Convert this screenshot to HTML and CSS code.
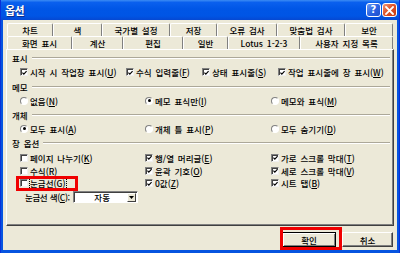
FILE: index.html
```html
<!DOCTYPE html>
<html lang="ko">
<head>
<meta charset="utf-8">
<title>옵션</title>
<link rel="stylesheet" href="styles.css">
</head>
<body>
<div class="win">
  <div class="titlebar">
    <span class="title">옵션</span>
    <div class="tbtns">
      <span class="tbtn help">?</span>
      <span class="tbtn close"><svg width="9" height="9" viewBox="0 0 9 9"><path d="M1 1 L8 8 M8 1 L1 8" stroke="#fff" stroke-width="1.8" stroke-linecap="square"/></svg></span>
    </div>
  </div>
  <div class="client">
    <div class="tabs">
      <div class="tabrow">
        <span class="tab w46">차트</span>
        <span class="tab w49">색</span>
        <span class="tab w68">국가별 설정</span>
        <span class="tab w47">저장</span>
        <span class="tab w60">오류 검사</span>
        <span class="tab w68">맞춤법 검사</span>
        <span class="tab grow">보안</span>
      </div>
      <div class="tabrow">
        <span class="tab sel w65">화면 표시</span>
        <span class="tab w51">계산</span>
        <span class="tab w60">편집</span>
        <span class="tab w45">일반</span>
        <span class="tab w72">Lotus 1-2-3</span>
        <span class="tab grow">사용자 지정 목록</span>
      </div>
    </div>
    <div class="panel">
      <div class="hdr first">표시</div>
      <div class="row four tall">
        <label class="opt"><span class="cb"><svg width="6" height="6" viewBox="0 0 6 6"><path d="M0.5 2.5 L2.2 4.3 L5.5 0.8" stroke="#000" stroke-width="1.4" fill="none"/></svg></span>시작 시 작업창 표시(<u>U</u>)</label>
        <label class="opt"><span class="cb"><svg width="6" height="6" viewBox="0 0 6 6"><path d="M0.5 2.5 L2.2 4.3 L5.5 0.8" stroke="#000" stroke-width="1.4" fill="none"/></svg></span>수식 입력줄(<u>F</u>)</label>
        <label class="opt"><span class="cb"><svg width="6" height="6" viewBox="0 0 6 6"><path d="M0.5 2.5 L2.2 4.3 L5.5 0.8" stroke="#000" stroke-width="1.4" fill="none"/></svg></span>상태 표시줄(<u>S</u>)</label>
        <label class="opt"><span class="cb"><svg width="6" height="6" viewBox="0 0 6 6"><path d="M0.5 2.5 L2.2 4.3 L5.5 0.8" stroke="#000" stroke-width="1.4" fill="none"/></svg></span>작업 표시줄에 창 표시(<u>W</u>)</label>
      </div>
      <div class="hdr">메모</div>
      <div class="row three">
        <label class="opt"><span class="rb"></span>없음(<u>N</u>)</label>
        <label class="opt"><span class="rb on"></span>메모 표식만(<u>I</u>)</label>
        <label class="opt"><span class="rb"></span>메모와 표식(<u>M</u>)</label>
      </div>
      <div class="hdr">개체</div>
      <div class="row three">
        <label class="opt"><span class="rb on"></span>모두 표시(<u>A</u>)</label>
        <label class="opt"><span class="rb"></span>개체 틀 표시(<u>P</u>)</label>
        <label class="opt"><span class="rb"></span>모두 숨기기(<u>D</u>)</label>
      </div>
      <div class="hdr wide">창 옵션</div>
      <div class="row three">
        <label class="opt"><span class="cb"></span>페이지 나누기(<u>K</u>)</label>
        <label class="opt"><span class="cb"><svg width="6" height="6" viewBox="0 0 6 6"><path d="M0.5 2.5 L2.2 4.3 L5.5 0.8" stroke="#000" stroke-width="1.4" fill="none"/></svg></span>행/열 머리글(<u>E</u>)</label>
        <label class="opt"><span class="cb"><svg width="6" height="6" viewBox="0 0 6 6"><path d="M0.5 2.5 L2.2 4.3 L5.5 0.8" stroke="#000" stroke-width="1.4" fill="none"/></svg></span>가로 스크롤 막대(<u>T</u>)</label>
      </div>
      <div class="row three">
        <label class="opt"><span class="cb"></span>수식(<u>R</u>)</label>
        <label class="opt"><span class="cb"><svg width="6" height="6" viewBox="0 0 6 6"><path d="M0.5 2.5 L2.2 4.3 L5.5 0.8" stroke="#000" stroke-width="1.4" fill="none"/></svg></span>윤곽 기호(<u>O</u>)</label>
        <label class="opt"><span class="cb"><svg width="6" height="6" viewBox="0 0 6 6"><path d="M0.5 2.5 L2.2 4.3 L5.5 0.8" stroke="#000" stroke-width="1.4" fill="none"/></svg></span>세로 스크롤 막대(<u>V</u>)</label>
      </div>
      <div class="row three short">
        <label class="opt"><span class="cb"></span><span class="focus">눈금선(<u>G</u>)</span></label>
        <label class="opt"><span class="cb"><svg width="6" height="6" viewBox="0 0 6 6"><path d="M0.5 2.5 L2.2 4.3 L5.5 0.8" stroke="#000" stroke-width="1.4" fill="none"/></svg></span>0값(<u>Z</u>)</label>
        <label class="opt"><span class="cb"><svg width="6" height="6" viewBox="0 0 6 6"><path d="M0.5 2.5 L2.2 4.3 L5.5 0.8" stroke="#000" stroke-width="1.4" fill="none"/></svg></span>시트 탭(<u>B</u>)</label>
      </div>
      <div class="colorrow">
        <span class="clabel">눈금선 색(<u>C</u>):</span>
        <span class="combo"><span class="cval">자동</span><span class="carrow"><svg width="5" height="3" viewBox="0 0 5 3"><path d="M0 0 H5 L2.5 3 Z" fill="#000"/></svg></span></span>
      </div>
    </div>
    <div class="buttons">
      <span class="btn default">확인</span>
      <span class="btn cancel">취소</span>
    </div>
  </div>
  <div class="mark mark-grid"></div>
  <div class="mark mark-ok"></div>
</div>
</body>
</html>
```

FILE: styles.css
```css
html, body {
  margin: 0;
  padding: 0;
}
body {
  width: 400px;
  height: 253px;
  overflow: hidden;
  font-family: "Noto Sans CJK KR", "Noto Sans", sans-serif;
  font-size: 8.5px;
  font-weight: 500;
  word-spacing: 1.5px;
  color: #000;
}
.win {
  position: relative;
  width: 400px;
  height: 253px;
  box-sizing: border-box;
  background: #0654E0;
  display: flex;
  flex-direction: column;
  border-left: 1px solid #0831D9;
  border-right: 1px solid #0831D9;
}
.titlebar {
  height: 20px;
  flex: none;
  display: flex;
  align-items: center;
  justify-content: space-between;
  padding: 0 2px 0 4px;
  background: linear-gradient(to bottom, #3C8CF4 0%, #0A60EE 12%, #0056E6 45%, #0055E5 80%, #0648D2 100%);
}
.title {
  color: #fff;
  font-weight: bold;
  font-size: 11px;
  letter-spacing: -0.5px;
  text-shadow: 1px 1px 0 #0A2F8C;
}
.tbtns {
  display: flex;
  gap: 1px;
}
.tbtn {
  width: 15px;
  height: 14px;
  box-sizing: border-box;
  border: 1px solid #fff;
  border-radius: 3px;
  display: flex;
  align-items: center;
  justify-content: center;
}
.help {
  background: linear-gradient(135deg, #6B9CF5 0%, #2C64E3 50%, #1F4FCC 100%);
  color: #fff;
  font-family: "DejaVu Sans", sans-serif;
  font-weight: bold;
  font-size: 10px;
  line-height: 12px;
}
.close {
  background: linear-gradient(135deg, #F09A7C 0%, #E0542A 45%, #C63A12 100%);
}
.client {
  flex: 1;
  margin: 0 2px 3px 2px;
  background: #ECE9D8;
  padding: 3px 3px 0 3px;
  display: flex;
  flex-direction: column;
}
.tabs {
  margin: 0 1px;
}
.tabrow {
  display: flex;
  height: 13px;
}
.tab {
  box-sizing: border-box;
  height: 13px;
  line-height: 12px;
  text-align: center;
  border-top: 1px solid #fff;
  border-left: 1px solid #fff;
  border-right: 1px solid #808080;
  border-radius: 2px 2px 0 0;
  white-space: nowrap;
}
.w45 { width: 45px; }
.w46 { width: 46px; }
.w47 { width: 47px; }
.w49 { width: 49px; }
.w51 { width: 51px; }
.w60 { width: 60px; }
.w65 { width: 65px; }
.w68 { width: 68px; }
.w72 { width: 72px; }
.grow { flex: 1; }
.panel {
  height: 177px;
  box-sizing: border-box;
  border-top: 1px solid #fff;
  border-left: 1px solid #fff;
  border-right: 1px solid #404040;
  border-bottom: 1px solid #404040;
  box-shadow: inset -1px -1px 0 #808080;
  padding: 1px 3px 0 5px;
}
.hdr {
  display: flex;
  align-items: center;
  height: 15px;
}
.hdr.first { height: 14px; }
.hdr.wide { height: 16px; }
.hdr::after {
  content: "";
  flex: 1;
  margin-left: 4px;
  border-top: 1px solid #ACA899;
  border-bottom: 1px solid #fff;
}
.row {
  display: grid;
  align-items: center;
  height: 13px;
  padding-left: 8px;
}
.row.tall { height: 14px; }
.row.short { height: 12px; }
.row.four { grid-template-columns: 106px 76px 76px 1fr; }
.row.three { grid-template-columns: 125px 126px 1fr; }
.opt {
  display: flex;
  align-items: center;
  white-space: nowrap;
}
.cb {
  width: 8px;
  height: 8px;
  box-sizing: border-box;
  flex: none;
  margin-right: 2px;
  background: #fff;
  border: 1px solid;
  border-color: #808080 #F0F0F0 #F0F0F0 #808080;
  box-shadow: inset 1px 1px 0 #404040;
  display: flex;
  align-items: center;
  justify-content: center;
}
.cb svg { margin: 1px 0 0 1px; }
.rb {
  width: 8px;
  height: 8px;
  box-sizing: border-box;
  flex: none;
  margin-right: 2px;
  border-radius: 50%;
  background: #fff;
  border: 1px solid;
  border-color: #808080 #fff #fff #808080;
  display: flex;
  align-items: center;
  justify-content: center;
}
.rb.on::after {
  content: "";
  width: 3px;
  height: 3px;
  border-radius: 50%;
  background: #000;
}
.focus {
  outline: 1px dotted #000;
  outline-offset: 0;
}
.colorrow {
  display: flex;
  align-items: center;
  height: 16px;
  padding-left: 13px;
}
.clabel {
  white-space: nowrap;
  letter-spacing: -0.4px;
  word-spacing: 0.5px;
  margin-right: 3px;
}
.combo {
  width: 65px;
  height: 12px;
  box-sizing: border-box;
  background: #fff;
  border: 1px solid;
  border-color: #808080 #fff #fff #808080;
  box-shadow: inset 1px 1px 0 #404040;
  display: flex;
  align-items: center;
}
.cval {
  flex: 1;
  text-align: center;
  padding-left: 4px;
}
.carrow {
  width: 9px;
  height: 9px;
  margin-right: 1px;
  box-sizing: border-box;
  background: #ECE9D8;
  border: 1px solid;
  border-color: #fff #404040 #404040 #fff;
  display: flex;
  align-items: center;
  justify-content: center;
}
.buttons {
  display: flex;
  justify-content: flex-end;
  gap: 6px;
  margin-top: 6px;
  margin-right: 1px;
}
.btn {
  height: 15px;
  box-sizing: border-box;
  display: flex;
  align-items: center;
  justify-content: center;
  background: #ECE9D8;
  border: 1px solid;
  border-color: #fff #404040 #404040 #fff;
  box-shadow: inset -1px -1px 0 #808080;
}
.btn.default {
  width: 54px;
  border-color: #000;
  box-shadow: inset 1px 1px 0 #fff, inset -1px -1px 0 #808080;
}
.btn.cancel { width: 51px; }
.mark {
  position: absolute;
  box-sizing: border-box;
  border: 3px solid #F00000;
}
.mark-grid {
  left: 15px;
  top: 176px;
  width: 62px;
  height: 15px;
}
.mark-ok {
  left: 279px;
  top: 227px;
  width: 62px;
  height: 23px;
}
```
